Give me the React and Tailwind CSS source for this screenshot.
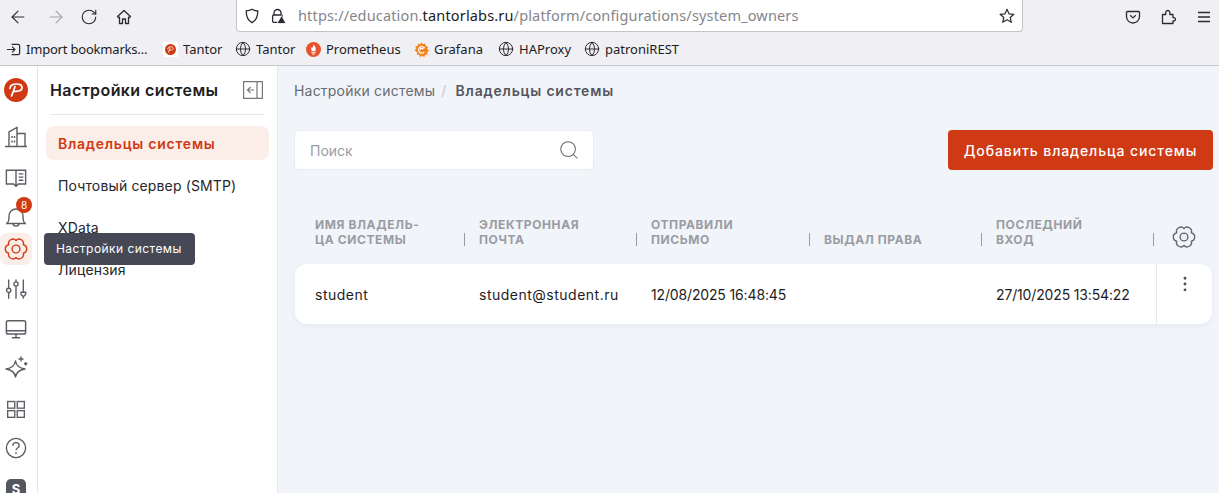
import { ArrowLeft, ArrowRight, RotateCw, Globe, Search, EllipsisVertical } from "lucide-react";

const GearIcon = ({ className }) => (
  <svg viewBox="0 0 24 24" fill="none" stroke="currentColor" strokeWidth="1.300" strokeLinejoin="round" className={className}>
    <path d="M18.750 8.100A4 4 0 0 1 18.750 15.900 4 4 0 0 1 12 19.800 4 4 0 0 1 5.250 15.900 4 4 0 0 1 5.250 8.100 4 4 0 0 1 12 4.200 4 4 0 0 1 18.750 8.100Z" />
    <circle cx="12" cy="12" r="3.600" />
  </svg>
);

const BrandLogo = ({ className }) => (
  <svg viewBox="0 0 24 24" className={className}>
    <circle cx="12" cy="12" r="12" fill="#cf3a14" />
    <path d="M6 10.500c0-3 3-4.500 6.500-4.500 3.200 0 5.500 1.200 5.500 3.500s-2.500 3.800-6 3.800H9.500M11 8.500c-1 3-2 6.500-3.500 9.500" fill="none" stroke="#fff" strokeWidth="1.700" strokeLinecap="round" />
  </svg>
);

function Bookmark({ icon, label, className }) {
  return (
    <div className={`flex items-center gap-[5px] ${className}`}>
      {icon}
      <span>{label}</span>
    </div>
  );
}

const BookmarkGlobe = () => <Globe className="w-[16px] h-[16px] text-[#2b2a33]" strokeWidth={1.500} />;

function BrowserChrome() {
  return (
    <div className="h-[66px] shrink-0 bg-[#f0f0f4] border-b border-[#c8c8cc] text-[#1c1b22] font-['Noto_Sans',sans-serif]">
      <div className="h-[33px] flex items-start">
        <div className="w-[236px] h-[33px] flex items-center text-[#2b2a33]">
          <ArrowLeft className="ml-[8px] w-5 h-5" strokeWidth={1.400} />
          <ArrowRight className="ml-[18px] w-5 h-5 text-[#a5a5aa]" strokeWidth={1.400} />
          <RotateCw className="ml-[14px] w-[18px] h-[18px]" strokeWidth={1.500} />
          <svg viewBox="0 0 16 16" fill="none" stroke="currentColor" strokeWidth="1.300" strokeLinejoin="round" className="ml-[18px] w-4 h-4">
            <path d="M1.500 7.500 8 1.500l6.500 6-1.300 1.200-.7-.6v6.400H9.500V10h-3v4.500h-3V8.100l-.7.600z" />
          </svg>
        </div>
        <div className="w-[787px] h-[32px] bg-white border border-[#c4c4c8] border-t-0 rounded-b-[4px] flex items-center">
          <svg viewBox="0 0 16 16" fill="none" stroke="#2b2a33" strokeWidth="1.300" className="ml-[7px] w-4 h-4 shrink-0">
            <path d="M8 1.300c1.800 1.100 3.700 1.500 5.800 1.500 0 5.500-1.500 9.700-5.800 11.900C3.700 12.500 2.200 8.300 2.200 2.800 4.300 2.800 6.200 2.400 8 1.300z" />
          </svg>
          <svg viewBox="0 0 16 16" className="ml-[10px] w-4 h-4 shrink-0">
            <path d="M4 7V5a3.500 3.500 0 0 1 7 0v2" fill="none" stroke="#2b2a33" strokeWidth="1.300" />
            <rect x="2.600" y="7" width="9.800" height="7.300" rx="1.300" fill="none" stroke="#2b2a33" strokeWidth="1.300" />
            <path d="M11.500 7.500 16 15.500H7z" fill="#2b2a33" stroke="#fff" strokeWidth=".8" />
          </svg>
          <div className="ml-[12px] text-[14.500px] tracking-[.16px] text-[#85858b] whitespace-nowrap">
            https://education.<span className="text-[#1c1b22]">tantorlabs.ru</span>/platform/configurations/system_owners
          </div>
          <svg viewBox="0 0 16 16" fill="none" stroke="#2b2a33" strokeWidth="1.200" strokeLinejoin="round" className="ml-auto mr-[7px] w-4 h-4 shrink-0">
            <path d="m8 1.300 2 4.500 4.900.5-3.700 3.200 1.100 4.800L8 11.800l-4.300 2.500 1.100-4.800L1.100 6.300 6 5.800z" />
          </svg>
        </div>
        <div className="flex-1 h-[33px] flex items-center text-[#2b2a33]">
          <svg viewBox="0 0 16 16" fill="none" stroke="currentColor" strokeWidth="1.300" strokeLinejoin="round" className="ml-[102px] w-4 h-4">
            <path d="M2.500 2.500h11a1 1 0 0 1 1 1v4a6.500 6.500 0 0 1-13 0v-4a1 1 0 0 1 1-1z" />
            <path d="m5.200 6.200 2.800 2.700 2.800-2.700" />
          </svg>
          <svg viewBox="0 0 16 16" fill="none" stroke="currentColor" strokeWidth="1.300" strokeLinejoin="round" className="ml-[20px] w-4 h-4">
            <path d="M1.500 14.500V5.500h3.300c-.5-2 .2-4 2-4s2.500 2 2 4H12v3.200c1.500-.3 2.500.4 2.500 1.600s-1 1.900-2.500 1.600v2.600z" />
          </svg>
          <svg viewBox="0 0 16 16" stroke="currentColor" strokeWidth="1.400" className="ml-[19px] w-4 h-4">
            <path d="M2 3.500h12M2 8h12M2 12.500h12" />
          </svg>
        </div>
      </div>
      <div className="h-[32px] flex items-center text-[13px] leading-none whitespace-nowrap">
        <svg viewBox="0 0 16 16" fill="none" stroke="#2b2a33" strokeWidth="1.300" className="ml-[6px] w-[15px] h-[15px]">
          <path d="M6 2.500h7a1.500 1.500 0 0 1 1.500 1.500v8a1.500 1.500 0 0 1-1.500 1.500H6M1 8h8.500M6.500 5l3 3-3 3" />
        </svg>
        <span className="ml-[5px] w-[137px] tracking-[-.2px]">Import bookmarks…</span>
        <Bookmark
          label="Tantor"
          className="w-[72px]"
          icon={
            <span className="w-[15px] h-[15px] bg-white flex items-center justify-center">
              <BrandLogo className="w-[11px] h-[11px]" />
            </span>
          }
        />
        <Bookmark label="Tantor" className="w-[71px] gap-[3px]" icon={<BookmarkGlobe />} />
        <Bookmark
          label="Prometheus"
          className="w-[108px]"
          icon={
            <svg viewBox="0 0 16 16" className="w-[15px] h-[15px]">
              <circle cx="8" cy="8" r="8" fill="#e6522c" />
              <path d="M8 2.500c.5 1.500 2.500 2.500 2.500 5 0 .8-.3 1.500-.8 2H6.300c-.5-.5-.8-1.200-.8-2 0-1 .6-1.800 1-2.200 0 .8.300 1.200.7 1.200C7.500 5 7.500 4 8 2.500zM5.500 10.300h5v1.200h-5zM6.500 12.300h3c0 .8-.7 1.300-1.500 1.300s-1.500-.5-1.500-1.300z" fill="#fff" />
            </svg>
          }
        />
        <Bookmark
          label="Grafana"
          className="w-[84px]"
          icon={
            <svg viewBox="0 0 16 16" className="w-[15px] h-[15px]">
              <path d="M8 .500l1.500 2 2.500-.8.500 2.500 2.500.8-.8 2.500 1.800 1.500-1.800 1.800.3 2.500-2.500.300-1 2.300-2.300-1-2.200 1-1-2.300-2.500-.300.300-2.500L.500 8.800 2.300 7.300l-.8-2.500L4 4l.5-2.300 2 .800z" fill="#f6821f" />
              <path d="M11 10.500a3.500 3.500 0 1 1 .3-4M6.500 8.500a2 2 0 0 1 3.500-1" fill="none" stroke="#fff" strokeWidth="1.300" />
            </svg>
          }
        />
        <Bookmark label="HAProxy" className="w-[86px] gap-[3px]" icon={<BookmarkGlobe />} />
        <Bookmark label="patroniREST" className="gap-[3px]" icon={<BookmarkGlobe />} />
      </div>
    </div>
  );
}

function Rail() {
  return (
    <div className="relative w-[38px] shrink-0 h-full bg-white border-r border-[#e6e7ec] pr-[5px] flex flex-col items-center overflow-hidden">
      <BrandLogo className="mt-[12px] ml-[-1px] w-6 h-6 shrink-0" />
      <div className="mt-[12px] h-[43px] flex items-center justify-center shrink-0">
        <svg viewBox="0 0 24 24" fill="none" stroke="#5c5c64" strokeWidth="1.400" className="w-6 h-6">
          <path d="M1 22.500h22M5 22.500V8l8-4.500v19M13 9.500h8v13M8 12v2M10.500 12v2M8 16.500v2M10.500 16.500v2" />
        </svg>
      </div>
      <div className="h-[42px] flex items-center justify-center shrink-0">
        <svg viewBox="0 0 24 24" fill="none" stroke="#5c5c64" strokeWidth="1.500" className="w-[22px] h-[22px]">
          <path d="M1.500 3.500h21v15h-8l-2.500 2.500-2.500-2.500h-8zM12 3.500V21M15 7.500h5M15 11h5M15 14.500h5" />
        </svg>
      </div>
      <div className="relative h-[34px] flex items-center justify-center shrink-0">
        <svg viewBox="0 0 24 24" fill="none" stroke="#5c5c64" strokeWidth="1.400" className="w-6 h-6 mt-[2px]">
          <path d="M3 18.500c1.500-1.500 2-3 2-5.500v-2a7 7 0 0 1 14 0v2c0 2.500.5 4 2 5.500zM9 18.500c0 3.500 6 3.500 6 0" />
        </svg>
        <span className="absolute left-[12px] top-[-2px] w-4 h-4 rounded-full bg-[#cf3a14] text-white text-[10px] leading-4 text-center font-['Inter',sans-serif]">
          8
        </span>
      </div>
      <div className="w-[32px] h-[32px] rounded-lg bg-[#fbeee9] flex items-center justify-center shrink-0 text-[#cf3a14]">
        <GearIcon className="w-[26px] h-[26px]" />
      </div>
      <div className="mt-[4px] h-[40px] flex items-center justify-center shrink-0">
        <svg viewBox="0 0 24 24" fill="none" stroke="#5c5c64" strokeWidth="1.500" className="w-[22px] h-[22px]">
          <path d="M4 1.500v10M4 16v6.500M12 1.500v3M12 9v13.500M20 1.500V16M20 21v1.500" />
          <circle cx="4" cy="13.500" r="2.300" />
          <circle cx="12" cy="6.500" r="2.300" />
          <path d="M17.500 15.500h5V18L20 20.500 17.500 18z" />
        </svg>
      </div>
      <div className="h-[40px] flex items-center justify-center shrink-0">
        <svg viewBox="0 0 24 24" fill="none" stroke="#5c5c64" strokeWidth="1.600" className="w-[22px] h-[22px]">
          <rect x="1.500" y="3" width="21" height="14.500" rx="2" />
          <path d="M1.500 14h21M12 17.500v4M7.500 21.500h9" />
        </svg>
      </div>
      <div className="h-[38px] flex items-center justify-center shrink-0">
        <svg viewBox="0 0 24 24" fill="none" stroke="#5c5c64" strokeWidth="1.400" strokeLinejoin="round" className="w-[24px] h-[24px]">
          <path d="M11.500 5c.7 4.500 3 7 9.500 8-6.500 1-8.800 3.500-9.500 8-.7-4.500-3-7-9.500-8 6.500-1 8.800-3.500 9.500-8zM17 .5v5M14.500 3h5M21.700 6v3.400M20 7.700h3.400" />
        </svg>
      </div>
      <div className="h-[44px] flex items-center justify-center shrink-0">
        <svg viewBox="0 0 24 24" fill="none" stroke="#5c5c64" strokeWidth="1.600" className="w-[20px] h-[20px]">
          <rect x="2" y="3" width="8.500" height="8" />
          <rect x="13.500" y="3" width="8.500" height="8" />
          <rect x="2" y="14" width="8.500" height="8" />
          <rect x="13.500" y="14" width="8.500" height="8" />
        </svg>
      </div>
      <div className="h-[34px] flex items-center justify-center shrink-0">
        <svg viewBox="0 0 24 24" fill="none" stroke="#5c5c64" strokeWidth="1.500" className="w-[22px] h-[22px]">
          <circle cx="12" cy="12" r="10.500" />
          <path d="M8.500 9.500c0-4.500 7-4.500 7 0 0 2.500-3.500 2.500-3.500 5" />
          <path d="M12 16.500v2" />
        </svg>
      </div>
      <div className="mt-[14px] w-5 h-5 rounded-[5px] bg-[#55565e] text-white text-[13px] font-bold leading-5 text-center shrink-0 font-['Inter',sans-serif]">
        S
      </div>
    </div>
  );
}

function Sidebar() {
  return (
    <div className="w-[240px] shrink-0 h-full bg-white border-r border-[#e6e7ec] px-2">
      <div className="mx-1 h-[49px] flex items-center justify-between border-b border-[#e6e7ec]">
        <h2 className="text-[16px] font-semibold text-[#1d1d22] tracking-[.4px]">Настройки системы</h2>
        <svg viewBox="0 0 20 20" fill="none" stroke="#77777d" strokeWidth="1.200" className="w-5 h-5 mr-[2px]">
          <path d="M.6 1.600h18.800v16.800H.6zM14 1.600v16.800M11 10H4.500M7.500 7l-3 3 3 3" />
        </svg>
      </div>
      <div className="mt-[11px] h-[34px] rounded-lg bg-[#fbeee9] px-3 flex items-center text-[14px] font-semibold tracking-[.75px] text-[#cf3a14]">
        Владельцы системы
      </div>
      <div className="mt-[15px] flex flex-col text-[14px] tracking-[.14px] text-[#26262b] px-3 gap-[21px] leading-[21px]">
        <span>Почтовый сервер (SMTP)</span>
        <span>XData</span>
        <span>Лицензия</span>
      </div>
    </div>
  );
}

const columns = [
  { w: "w-[185px]", pl: "pl-[21px]", title: "Имя владель-\nца системы" },
  { w: "w-[172px]", pl: "", title: "Электронная\nпочта" },
  { w: "w-[173px]", pl: "", title: "Отправили\nписьмо" },
  { w: "w-[172px]", pl: "", title: "Выдал права" },
  { w: "w-[172px]", pl: "", title: "Последний\nвход" },
];

function OwnersTable() {
  return (
    <div className="mt-[47px]">
      <div className="flex items-end h-[30px]">
        {columns.map((col) => (
          <div key={col.title} className={`${col.w} ${col.pl} flex items-end shrink-0`}>
            <span className="flex-1 whitespace-pre-line uppercase text-[12px] leading-[15px] font-bold tracking-[.6px] text-[#9a9ca2]">
              {col.title}
            </span>
            <span className="w-px h-[13px] bg-[#9a9ca2] mr-[14px] mb-px" />
          </div>
        ))}
        <GearIcon className="ml-[3px] w-[26px] h-[26px] mb-[-3px] text-[#66666e]" />
      </div>
      <div className="mt-[17px] ml-px w-[917px] h-[60px] bg-white rounded-xl shadow-[0_2px_6px_rgba(30,40,70,0.05)] flex text-[14px] tracking-[.5px] text-[#1d1d22]">
        <div className="w-[184px] pl-[20px] flex items-center shrink-0">student</div>
        <div className="w-[172px] flex items-center shrink-0">student@student.ru</div>
        <div className="w-[173px] flex items-center shrink-0 tracking-[-.15px]">12/08/2025 16:48:45</div>
        <div className="w-[172px] shrink-0" />
        <div className="w-[160px] flex items-center shrink-0 tracking-[-.15px]">27/10/2025 13:54:22</div>
        <div className="flex-1 border-l border-[#e6e7ec] flex justify-center pt-[10px]">
          <EllipsisVertical className="w-5 h-5 text-[#4a4a50]" strokeWidth={1.500} />
        </div>
      </div>
    </div>
  );
}

export default function App() {
  return (
    <div className="relative w-[1219px] h-[493px] flex flex-col overflow-hidden font-['Inter',sans-serif]">
      <BrowserChrome />
      <div className="flex flex-1 min-h-0">
        <Rail />
        <Sidebar />
        <main className="flex-1 bg-[#f1f4f9] pl-4 pr-[6px]">
          <div className="h-[49px] flex items-center text-[14px] tracking-[.2px]">
            <span className="text-[#6a6b72]">Настройки системы</span>
            <span className="ml-[6px] mr-[9px] text-[#c4c5ca]">/</span>
            <span className="font-semibold text-[#55565d] tracking-[.8px]">Владельцы системы</span>
          </div>
          <div className="mt-[15px] flex justify-between">
            <div className="w-[300px] h-10 bg-white border border-[#e9ebf0] rounded-[4px] flex items-center justify-between pl-[15px] pr-[13px]">
              <span className="text-[14px] text-[#9a9ca2]">Поиск</span>
              <Search className="w-[22px] h-[22px] text-[#66666e]" strokeWidth={1.100} />
            </div>
            <button className="w-[265px] h-10 bg-[#cf3a14] rounded-[4px] text-white text-[14px] font-medium tracking-[.9px]">
              Добавить владельца системы
            </button>
          </div>
          <OwnersTable />
        </main>
      </div>
      <div className="absolute left-[44px] top-[233px] w-[151px] h-8 rounded-[4px] bg-[#464955] text-white text-[12px] tracking-[.45px] flex items-center pl-3">
        Настройки системы
      </div>
    </div>
  );
}
